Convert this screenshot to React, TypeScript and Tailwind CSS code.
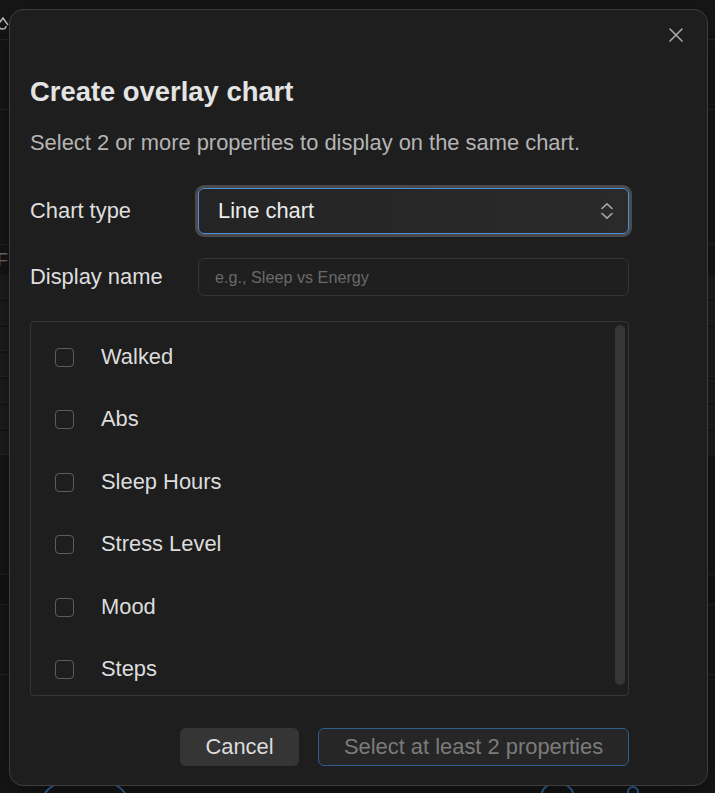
import React from "react";

const items = ["Walked", "Abs", "Sleep Hours", "Stress Level", "Mood", "Steps"];

function ChevronsUpDown() {
  return (
    <svg width="14" height="18" viewBox="0 0 14 18" fill="none" stroke="#a8a8a8" strokeWidth="1.6" strokeLinecap="round" strokeLinejoin="round">
      <path d="M2 6.5 L7 1.8 L12 6.5" />
      <path d="M2 11.5 L7 16.2 L12 11.5" />
    </svg>
  );
}

function CloseIcon() {
  return (
    <svg width="14" height="14" viewBox="0 0 14 14" fill="none" stroke="#a9a9a9" strokeWidth="1.6" strokeLinecap="round">
      <path d="M1 1 L13 13" />
      <path d="M13 1 L1 13" />
    </svg>
  );
}

function Background() {
  return (
    <div className="flex h-full w-full flex-col">
      <div className="flex h-[40px] border-b border-[#262626]">
        <svg width="14" height="20" viewBox="0 0 14 20" className="-ml-[4px] mt-[14px]" fill="none" stroke="#cfcfcf" strokeWidth="1.4">
          <path d="M1 12 L7 4 L12 11 M3 12 C3 16 10 16 10 12" />
        </svg>
      </div>
      <div className="h-[70px] border-b border-[#262626]" />
      <div className="h-[135px] border-b border-[#262626]" />
      <div className="flex h-[30px] items-center text-[18px] text-[#777] font-['Liberation_Sans',Arial,sans-serif]">
        <span className="-ml-[3px]">F</span>
      </div>
      <div className="flex flex-col gap-[2px]">
        {[0, 1, 2, 3, 4, 5, 6].map((i) => (
          <div key={i} className="h-[24px] bg-[#1f1f1f] border-b border-[#262626]" />
        ))}
      </div>
      <div className="h-[120px] border-b border-[#262626]" />
      <div className="h-[30px] bg-[#141414] border-b border-[#262626]" />
      <div className="h-[70px] border-b border-[#262626]" />
      <div className="flex-1" />
      <svg width="715" height="20" viewBox="0 0 715 20" fill="none" stroke="#3b6fb0" strokeWidth="2">
        <path d="M44 22 C55 0 115 0 126 22" />
        <path d="M541 22 C544 6 570 6 574 22" />
        <circle cx="633" cy="19" r="5" />
      </svg>
    </div>
  );
}

export default function App() {
  return (
    <div className="relative h-[793px] w-[715px] overflow-hidden bg-[#171717] font-['Liberation_Sans',Arial,sans-serif]">
      <Background />
      <div className="absolute left-[9px] top-[9px] flex h-[777px] w-[699px] flex-col rounded-[14px] border border-[#3d3d3d] bg-[#1e1e1e] pl-[20px] shadow-[0_10px_40px_rgba(0,0,0,0.5)]">
        <button className="absolute right-[24px] top-[18px] flex h-[14px] w-[14px] items-center justify-center">
          <CloseIcon />
        </button>
        <h2 className="mt-[66px] text-[27.4px] font-bold leading-[32px] text-[#e4e4e4]">Create overlay chart</h2>
        <p className="mt-[20px] text-[21.9px] leading-[30px] text-[#b4b4b4]">
          Select 2 or more properties to display on the same chart.
        </p>
        <div className="mt-[30px] flex w-[599px] items-center">
          <div className="w-[168px] text-[21.9px] text-[#dedede]">Chart type</div>
          <div className="flex h-[46px] flex-1 items-center justify-between rounded-[6px] border border-[#4d8fd8] bg-gradient-to-r from-[#242424] to-[#2a2a2a] pl-[19px] pr-[14px] shadow-[0_0_0_3px_#4a4a4a]">
            <span className="text-[21.9px] text-[#ececec]">Line chart</span>
            <ChevronsUpDown />
          </div>
        </div>
        <div className="mt-[24px] flex w-[599px] items-center">
          <div className="w-[168px] text-[21.9px] text-[#dedede]">Display name</div>
          <div className="flex h-[38px] flex-1 items-center rounded-[6px] border border-[#353535] bg-[#1f1f1f] pl-[16px]">
            <span className="text-[16.2px] text-[#6a6a6a]">e.g., Sleep vs Energy</span>
          </div>
        </div>
        <div className="relative mt-[25px] h-[375px] w-[599px] overflow-hidden rounded-[4px] border border-[#353535]">
          <div className="flex flex-col pt-[4px]">
            {items.map((it) => (
              <div key={it} className="flex h-[62.5px] shrink-0 items-center">
                <div className="ml-[24px] h-[19px] w-[19px] rounded-[4px] border border-[#5c5c5c]" />
                <span className="ml-[27px] text-[21.9px] text-[#dcdcdc]">{it}</span>
              </div>
            ))}
          </div>
          <div className="absolute right-[3px] top-[3px] h-[360px] w-[10px] rounded-full bg-[#363636]" />
        </div>
        <div className="mt-[32px] flex w-[599px] justify-end gap-[19px]">
          <button className="h-[38px] w-[119px] rounded-[6px] bg-[#353535] text-[21.9px] text-[#dcdcdc]">Cancel</button>
          <button className="h-[38px] w-[311px] rounded-[6px] border border-[#2f5d90] bg-[#262626] text-[21.9px] text-[#7b7b7b]">
            Select at least 2 properties
          </button>
        </div>
      </div>
    </div>
  );
}
